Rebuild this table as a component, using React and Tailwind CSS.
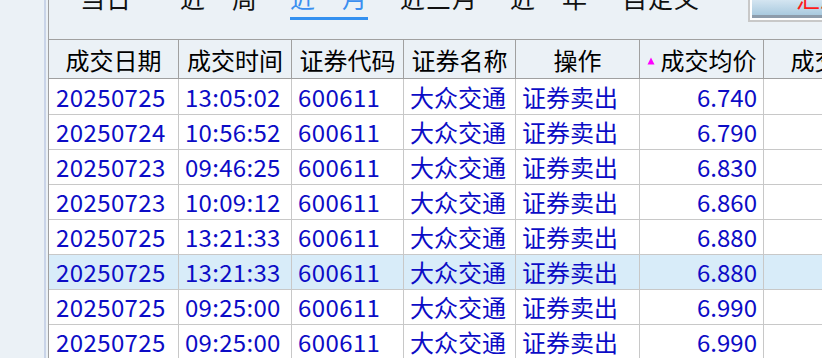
import React from "react";

const font = { fontFamily: '"Noto Sans CJK SC", "Noto Sans", sans-serif' };

const tabs = [
  { label: "当日", w: "w-[100px]" },
  { label: "近一周", w: "w-[110px]" },
  { label: "近一月", w: "w-[110px]", active: true },
  { label: "近三月", w: "w-[110px]" },
  { label: "近一年", w: "w-[112px]" },
  { label: "自定义", w: "w-[110px]" },
];

const colW = [
  "w-[130px]",
  "w-[113px]",
  "w-[112px]",
  "w-[112px]",
  "w-[124px]",
  "w-[124px]",
  "w-[150px]",
];

const headers = ["成交日期", "成交时间", "证券代码", "证券名称", "操作", "成交均价", "成交数量"];

const rows = [
  ["20250725", "13:05:02", "6.740"],
  ["20250724", "10:56:52", "6.790"],
  ["20250723", "09:46:25", "6.830"],
  ["20250723", "10:09:12", "6.860"],
  ["20250725", "13:21:33", "6.880"],
  ["20250725", "13:21:33", "6.880", true],
  ["20250725", "09:25:00", "6.990"],
  ["20250725", "09:25:00", "6.990"],
];

function SortUp() {
  return (
    <svg width="8" height="8" viewBox="0 0 8 8" className="mr-[6px] mt-[2px]">
      <polygon points="4,0.5 7.5,7.5 0.5,7.5" fill="#ff00ff" />
    </svg>
  );
}

export default function App() {
  return (
    <div
      className="w-[822px] h-[358px] overflow-hidden flex bg-[#ebf1f6] text-[24px]"
      style={font}
    >
      {/* left strip */}
      <div className="w-[46px] shrink-0 border-r-2 border-[#c9d4e8]" />
      <div className="w-[2px] shrink-0" />

      {/* main panel */}
      <div className="flex-1 flex flex-col border-l border-[#a0a0a0] min-w-0">
        {/* tab bar */}
        <div className="h-[39px] shrink-0 relative flex pl-[31px] overflow-hidden">
          {tabs.map((t) => (
            <div key={t.label} className={`${t.w} shrink-0 flex flex-col`}>
              <div
                className={`-mt-[15px] leading-[24px] text-[25px] tracking-[1px] ${
                  t.active ? "text-[#3b8ff0]" : "text-[#111]"
                }`}
              >
                {t.label}
              </div>
              {t.active && <div className="mt-[8px] w-[78px] h-[3px] bg-[#3390f0]" />}
            </div>
          ))}
          {/* summary button */}
          <div className="absolute left-[699px] -top-[4px] w-[120px] h-[26px] border-2 border-[#c8c8c8] bg-white p-[2px]">
            <div className="h-full bg-gradient-to-b from-[#d4e5f1] to-[#a9cadf] border-b-[3px] border-[#8d9cab] pl-[44px] overflow-hidden">
              <div className="-mt-[14px] leading-[24px] text-[24px] text-[#ff1a1a]">汇总</div>
            </div>
          </div>
        </div>

        {/* table */}
        <div className="border-t border-[#a0a0a0] flex flex-col">
          <div className="flex h-[39px] shrink-0 border-b border-[#a0a0a0]">
            {headers.map((h, i) => (
              <div
                key={h}
                className={`${colW[i]} shrink-0 border-r border-[#a0a0a0] flex items-center justify-center pt-[2px] text-black`}
              >
                {i === 5 && <SortUp />}
                {h}
              </div>
            ))}
          </div>

          {rows.map(([d, t, p, sel], ri) => (
            <div
              key={ri}
              className={`flex shrink-0 border-b border-[#c8c8c8] text-[#0c0cc6] ${
                ri === 0 ? "h-[36px]" : "h-[35px]"
              } ${sel ? "bg-[#d8ecf9]" : "bg-white"}`}
            >
              <div className={`${colW[0]} shrink-0 border-r border-[#c8c8c8] flex items-center pl-[7px] tracking-[0.4px]`}>{d}</div>
              <div className={`${colW[1]} shrink-0 border-r border-[#c8c8c8] flex items-center pl-[6px] tracking-[0.3px]`}>{t}</div>
              <div className={`${colW[2]} shrink-0 border-r border-[#c8c8c8] flex items-center pl-[6px] tracking-[0.4px]`}>600611</div>
              <div className={`${colW[3]} shrink-0 border-r border-[#c8c8c8] flex items-center pl-[6px]`}>大众交通</div>
              <div className={`${colW[4]} shrink-0 border-r border-[#c8c8c8] flex items-center pl-[6px]`}>证券卖出</div>
              <div className={`${colW[5]} shrink-0 border-r border-[#c8c8c8] flex items-center justify-end pr-[6px]`}>{p}</div>
              <div className={`${colW[6]} shrink-0 border-r border-[#c8c8c8]`} />
            </div>
          ))}
        </div>
      </div>
    </div>
  );
}
